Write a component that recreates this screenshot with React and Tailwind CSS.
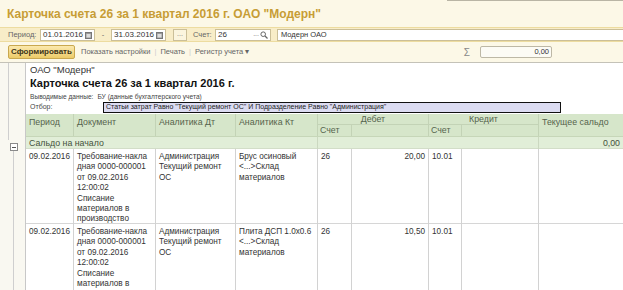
import React from "react";

const rows = [
  {
    date: "09.02.2016",
    doc: ["Требование-накла", "дная 0000-000001", "от 09.02.2016", "12:00:02", "Списание", "материалов в", "производство"],
    dt: ["Администрация", "Текущий ремонт", "ОС"],
    kt: ["Брус осиновый", "<...>Склад", "материалов"],
    acc: "26",
    sum: "20,00",
    kacc: "10.01",
    h: "h-[75px]",
  },
  {
    date: "09.02.2016",
    doc: ["Требование-накла", "дная 0000-000001", "от 09.02.2016", "12:00:02", "Списание", "материалов в", "производство"],
    dt: ["Администрация", "Текущий ремонт", "ОС"],
    kt: ["Плита ДСП 1.0x0.6", "<...>Склад", "материалов"],
    acc: "26",
    sum: "10,50",
    kacc: "10.01",
    h: "h-[80px]",
  },
];

const cols = "grid grid-cols-[48px_82px_80px_82px_34px_77px_33px_77px_1fr]";

const Field = ({ w, children, icon }) => (
  <div className={`${w} h-[12px] bg-white border border-[#cbbf98] flex items-center px-[2px] text-[8px] text-[#333]`}>
    <span className="flex-1 leading-none">{children}</span>
    {icon}
  </div>
);

const Cal = () => (
  <svg width="7" height="8" viewBox="0 0 7 8">
    <rect x="0.5" y="1.5" width="6" height="6" fill="#999" stroke="#777" />
    <rect x="1.5" y="3" width="4" height="3.5" fill="#ddd" />
  </svg>
);

const Cell = ({ lines, className = "" }) => (
  <div className={`border-r border-[#d2d2d2] px-[3px] pt-[3px] ${className}`}>
    {lines.map((l, i) => (
      <div key={i} className="whitespace-nowrap">{l}</div>
    ))}
  </div>
);

export default function App() {
  return (
    <div className="w-[623px] h-[290px] overflow-hidden bg-[#fcf8e7] flex flex-col" style={{ fontFamily: '"Liberation Sans", Arial, sans-serif' }}>
      <div className="h-px ml-[447px] bg-[#b9b5a5]" />
      <div className="h-[26px] flex items-center pl-[7px] text-[12px] font-bold text-[#c79d35]">
        Карточка счета 26 за 1 квартал 2016 г. ОАО "Модерн"
      </div>

      {/* period row */}
      <div className="h-[15px] bg-[#f8edc8] border-y border-[#eddca0] flex items-center text-[7.5px] text-[#666]">
        <span className="ml-[8px] w-[32px]">Период:</span>
        <Field w="w-[55px]" icon={<Cal />}>01.01.2016</Field>
        <span className="w-[16px] text-center">-</span>
        <Field w="w-[55px]" icon={<Cal />}>31.03.2016</Field>
        <div className="ml-[7px] w-[14px] h-[12px] border border-[#cbbf98] bg-[#fbf5de] text-[7px] leading-[8px] text-center text-[#777]">...</div>
        <span className="ml-[6px] w-[22px]">Счет:</span>
        <Field
          w="w-[56px]"
          icon={
            <span className="flex items-center gap-[1px] text-[7px] text-[#777]">
              ...
              <svg width="8" height="8" viewBox="0 0 8 8">
                <circle cx="3.2" cy="3.2" r="2.3" fill="none" stroke="#666" strokeWidth="1" />
                <line x1="5" y1="5" x2="7.5" y2="7.5" stroke="#666" strokeWidth="1.2" />
              </svg>
            </span>
          }
        >
          26
        </Field>
        <div className="ml-[6px] flex-1 h-[12px] bg-white border-y border-l border-[#cbbf98] flex items-center px-[3px] text-[7.5px] text-[#333]">Модерн ОАО</div>
      </div>

      {/* command bar */}
      <div className="h-[21px] flex items-center text-[7.5px] text-[#666] border-b border-[#c4c2b8]">
        <div className="ml-[8px] w-[67px] h-[14px] rounded-[2px] border border-[#c9a84f] bg-gradient-to-b from-[#fbe9ad] to-[#eccb68] flex items-center justify-center font-bold text-[8px] text-[#3d3417]">
          Сформировать
        </div>
        <span className="ml-[6px]">Показать настройки</span>
        <span className="mx-[4px] text-[#ccc]">|</span>
        <span>Печать</span>
        <span className="mx-[4px] text-[#ccc]">|</span>
        <span>Регистр учета ▾</span>
        <span className="ml-auto text-[10px] text-[#888] mr-[10px]">Σ</span>
        <div className="w-[72px] h-[12px] mr-[71px] rounded-[2px] border border-[#bdb8a6] bg-[#fcfbf5] flex items-center justify-end pr-[2px] text-[7.5px] text-[#333]">0,00</div>
      </div>

      {/* report */}
      <div className="flex-1 flex bg-white min-h-0">
        <div className="w-[26px] border-r border-[#c8c8c8] bg-[#f9f8f1] flex flex-col">
          <div className="h-[77px] w-[9px] border-r border-[#cfcfcf]" />
          <div className="ml-[10px] mt-[3px] w-[8px] h-[8px] border border-[#8a8a8a] bg-white flex items-center justify-center">
            <div className="w-[4px] h-px bg-[#555]" />
          </div>
          <div className="ml-[13px] w-px flex-1 bg-[#cfcfcf]" />
        </div>

        <div className="flex-1 flex flex-col text-[#333]">
          <div className="pl-[4px] pt-[1px] h-[12px] text-[9.5px] leading-[12px]">ОАО "Модерн"</div>
          <div className="pl-[4px] h-[17px] text-[11px] leading-[17px] font-bold text-[#111]">Карточка счета 26 за 1 квартал 2016 г.</div>
          <div className="pl-[4px] h-[12px] flex items-center gap-[4px] text-[6.6px] text-[#444] whitespace-nowrap">
            <span>Выводимые данные:</span>
            <span>БУ (данные бухгалтерского учета)</span>
          </div>
          <div className="pl-[4px] h-[12px] flex items-center text-[7px] text-[#444]">
            <span className="w-[73px]">Отбор:</span>
            <div className="w-[458px] h-[11px] border-[1.5px] border-[#111] bg-[#dcdcf2] flex items-center px-[2px] text-[#222] whitespace-nowrap overflow-hidden">
              Статьи затрат Равно "Текущий ремонт ОС" И Подразделение Равно "Администрация"
            </div>
          </div>

          {/* header */}
          <div className={`${cols} mt-[1px] bg-[#d6e6ca] text-[8.8px] text-[#55634c] border-b border-[#c6d6b8]`}>
            <div className="row-span-2 border-r border-[#c3d3b6] px-[3px] pt-[2px]">Период</div>
            <div className="row-span-2 border-r border-[#c3d3b6] px-[3px] pt-[2px]">Документ</div>
            <div className="row-span-2 border-r border-[#c3d3b6] px-[3px] pt-[2px]">Аналитика Дт</div>
            <div className="row-span-2 border-r border-[#c3d3b6] px-[3px] pt-[2px]">Аналитика Кт</div>
            <div className="col-span-2 h-[11px] border-r border-b border-[#c3d3b6] text-center leading-[11px]">Дебет</div>
            <div className="col-span-2 h-[11px] border-r border-b border-[#c3d3b6] text-center leading-[11px]">Кредит</div>
            <div className="row-span-2 px-[3px] pt-[2px] whitespace-nowrap">Текущее сальдо</div>
            <div className="h-[11px] border-r border-[#c3d3b6] px-[2px] leading-[11px]">Счет</div>
            <div className="h-[11px] border-r border-[#c3d3b6]" />
            <div className="h-[11px] border-r border-[#c3d3b6] px-[2px] leading-[11px]">Счет</div>
            <div className="h-[11px] border-r border-[#c3d3b6]" />
          </div>

          {/* opening balance */}
          <div className={`${cols} h-[12px] bg-[#e1eed8] text-[8.8px] leading-[12px] text-[#44523c] border-b border-[#d2ddc8]`}>
            <div className="col-span-4 border-r border-[#cbd8c0] px-[3px]">Сальдо на начало</div>
            <div className="col-span-4 border-r border-[#cbd8c0]" />
            <div className="text-right pr-[3px]">0,00</div>
          </div>

          {rows.map((r, i) => (
            <div key={i} className={`${cols} ${r.h} shrink-0 text-[8.2px] leading-[10.4px] text-[#333] border-b border-[#d6d6d6]`}>
              <Cell lines={[r.date]} />
              <Cell lines={r.doc} />
              <Cell lines={r.dt} />
              <Cell lines={r.kt} />
              <Cell lines={[r.acc]} />
              <Cell lines={[r.sum]} className="text-right" />
              <Cell lines={[r.kacc]} />
              <Cell lines={[]} />
              <div />
            </div>
          ))}
        </div>
      </div>
    </div>
  );
}
